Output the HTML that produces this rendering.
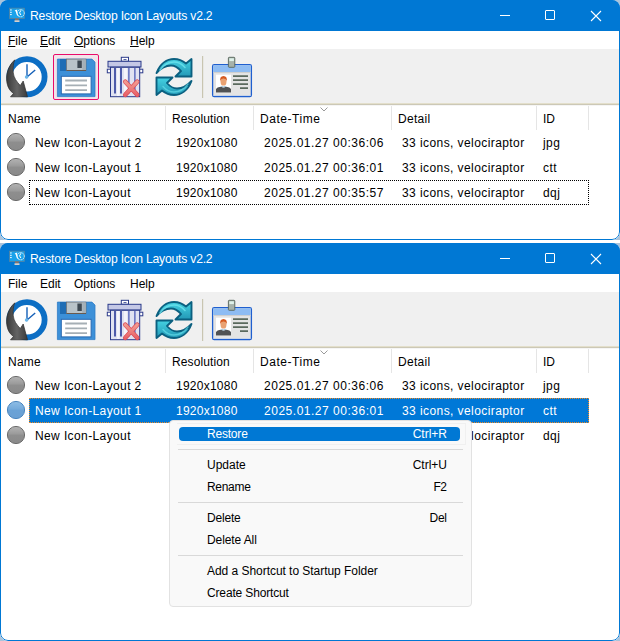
<!DOCTYPE html>
<html><head><meta charset="utf-8"><style>
*{box-sizing:border-box}
html,body{margin:0;padding:0;width:620px;height:641px;overflow:hidden;background:#fff;font-family:"Liberation Sans",sans-serif;font-size:12px;color:#000}
.shot{position:absolute;left:0;width:620px;background:#aac4dc}
.win{position:absolute;left:0;top:0;width:620px;height:100%;border-radius:8px;background:#fff;overflow:hidden}
.win::after{content:"";position:absolute;left:0;top:0;right:0;bottom:0;border:1px solid #0078d4;border-radius:8px;z-index:50;pointer-events:none}
.a{position:absolute;white-space:nowrap;line-height:14px}
.title{position:absolute;left:0;top:0;width:100%;height:31px;background:#0078d4}
.menubar{position:absolute;left:0;top:31px;width:100%;height:18px;background:#fff}
.toolbar{position:absolute;left:0;top:49px;width:100%;height:54px;background:#f0f0f0}
.tbl1{position:absolute;left:0;top:103px;width:100%;height:1px;background:#e3dfcb}
.tbl2{position:absolute;left:0;top:104px;width:100%;height:1px;background:#ccc8b6}
.tbl3{position:absolute;left:0;top:105px;width:100%;height:1px;background:#f5f5f5}
.col{position:absolute;top:106px;width:1px;height:24px;background:#e5e5e5}
.w{color:#fff}
.m{z-index:62}
</style></head><body>

<svg width="0" height="0" style="position:absolute">
<defs>
<linearGradient id="gball" x1="0" y1="0" x2="0" y2="1"><stop offset="0" stop-color="#b4b4b4"/><stop offset="0.45" stop-color="#9a9a9a"/><stop offset="0.5" stop-color="#8e8e8e"/><stop offset="1" stop-color="#8a8a8a"/></linearGradient>
<linearGradient id="gballs" x1="0" y1="0" x2="0" y2="1"><stop offset="0" stop-color="#8ebde6"/><stop offset="0.45" stop-color="#74aadb"/><stop offset="0.5" stop-color="#6aa2d6"/><stop offset="1" stop-color="#6aa0d4"/></linearGradient>
<symbol id="ball" viewBox="0 0 20 20"><circle cx="10" cy="10" r="8.6" fill="url(#gball)" stroke="#6c6c6c" stroke-width="1"/></symbol>
<symbol id="ballsel" viewBox="0 0 20 20"><circle cx="10" cy="10" r="8.6" fill="url(#gballs)" stroke="#4a86bf" stroke-width="1"/></symbol>
<g id="appicon">
  <rect x="9.4" y="8.1" width="15.2" height="10.4" fill="#1aa2ea" stroke="#6d7f8c" stroke-width="0.6"/>
  <rect x="10.1" y="9.4" width="1.6" height="1.1" fill="#eaf6ff"/><rect x="10.1" y="11.8" width="1.6" height="1.1" fill="#eaf6ff"/><rect x="10.1" y="14" width="1.6" height="1.1" fill="#eaf6ff"/>
  <circle cx="20.7" cy="13.2" r="3.6" fill="none" stroke="#e8f6ff" stroke-width="0.9" stroke-dasharray="1.4 0.5"/>
  <path d="M14.6 10.6 L17.2 9.6 L17 11.2 Q17.4 14 19 16.8 Q16.3 15.2 15.7 11.4 Z" fill="#fff"/>
  <path d="M20.9 10.3 L19.6 12.8 L20.9 15" fill="none" stroke="#fff" stroke-width="1"/>
  <rect x="15" y="18.5" width="3.8" height="1.8" fill="#8b7466"/>
  <rect x="14.5" y="20.3" width="5" height="1.7" fill="#d8d0cc"/>
</g>
<linearGradient id="garrow" x1="0" y1="0" x2="1" y2="0"><stop offset="0" stop-color="#3a3a3a"/><stop offset="0.5" stop-color="#646464"/><stop offset="1" stop-color="#3a3a3a"/></linearGradient>
<g id="clock">
  <circle cx="27" cy="76.8" r="17.6" fill="#fff" stroke="#0c6ec4" stroke-width="5.8"/>
  <path d="M27 64.3 V77 L35.2 70" fill="none" stroke="#1560b8" stroke-width="1.4"/>
  <circle cx="26.6" cy="77" r="1.8" fill="#6cb6e8"/>
  <path d="M14.8 59.8 C8 66 5.5 75 7 83 C8 88 10 91 13.5 93.5 L10.5 96.8 L27.5 96.8 L23.2 81 L20.3 85.5 C17 82 13.6 78 13.1 72 C12.9 67 13.4 63 14.8 59.8 Z" fill="url(#garrow)" stroke="#2e2e2e" stroke-width="0.7"/>
</g>
<g id="floppy">
  <path d="M57.4 59.1 H92 L95 62.1 V96.6 H57.4 Z" fill="#3d90d8" stroke="#2f7cc6" stroke-width="0.8"/>
  <rect x="60" y="59" width="6.5" height="12" fill="#1f6db5"/>
  <rect x="66.5" y="59.1" width="19.5" height="11.4" fill="#b9c3c9" stroke="#6d6560" stroke-width="0.6"/>
  <rect x="82.3" y="59.4" width="3.4" height="10.8" fill="#a4b0b8"/>
  <rect x="66.5" y="70" width="19.5" height="1" fill="#6a5a4e"/>
  <rect x="77.4" y="60.5" width="4.4" height="7.5" fill="#3d4852"/>
  <rect x="61.3" y="76.3" width="29.8" height="17.6" fill="#fff" stroke="#2a68b0" stroke-width="1"/>
  <path d="M65.2 80.5 H87 M65.2 85.3 H87 M65.2 90.2 H87" stroke="#a6afb5" stroke-width="1.8"/>
</g>
<linearGradient id="gx" x1="0" y1="0" x2="0" y2="1"><stop offset="0" stop-color="#f29a90"/><stop offset="1" stop-color="#e8636a"/></linearGradient>
<g id="trash">
  <rect x="121.3" y="57.3" width="7.2" height="4" fill="#fff" stroke="#2b3a8a" stroke-width="1"/>
  <rect x="123.5" y="59" width="3" height="0.8" fill="#2b3a8a"/>
  <rect x="108" y="61.3" width="33" height="5.7" fill="#c4c8e6" stroke="#2b3a8a" stroke-width="1"/>
  <rect x="107.3" y="69.2" width="3.4" height="3.6" fill="#fff" stroke="#2b3a8a" stroke-width="1"/>
  <rect x="139.4" y="69.2" width="3.4" height="3.6" fill="#fff" stroke="#2b3a8a" stroke-width="1"/>
  <rect x="110.5" y="67.3" width="29.2" height="29.4" fill="#e0e2f1" stroke="#2b3a8a" stroke-width="1"/>
  <rect x="117" y="68" width="2.5" height="28" fill="#f4f4fa"/><rect x="124" y="68" width="3" height="28" fill="#f4f4fa"/>
  <rect x="114" y="68" width="2" height="25.5" fill="#4d5aaa"/><rect x="120" y="68" width="2" height="25.5" fill="#4d5aaa"/>
  <rect x="128" y="68" width="1.7" height="25.5" fill="#6f7bc4"/><rect x="134" y="68" width="1.7" height="25.5" fill="#6f7bc4"/>
  <path d="M125.3 81.8 L137.2 94.7 M137.2 81.8 L125.3 94.7" stroke="#dc4650" stroke-width="4.6" stroke-linecap="round"/><path d="M125.3 81.8 L137.2 94.7 M137.2 81.8 L125.3 94.7" stroke="url(#gx)" stroke-width="3.2" stroke-linecap="round"/>
</g>
<linearGradient id="gref" x1="0" y1="0" x2="0" y2="1"><stop offset="0" stop-color="#45d2e2"/><stop offset="1" stop-color="#2398b6"/></linearGradient>
<g id="refresh" fill="url(#gref)" stroke="#0b6080" stroke-width="1.9" stroke-linejoin="round">
  <path d="M156.5 73 C160 63.5 167 59 174 59 C179 59 183 61 186 63.5 L191.5 59 L191.5 76.5 L175.5 76.5 L181 71 C178 67.5 175 65.5 171 65.5 C165 65.5 160.5 68.5 156.5 73 Z"/>
  <path d="M191.5 81 C188 90.5 181 95 174 95 C169 95 165 93 162 90.5 L156.5 95 L156.5 77.5 L172.5 77.5 L167 83 C170 86.5 173 88.5 177 88.5 C183 88.5 187.5 85.5 191.5 81 Z"/>

<path d="M160 70 C164 64.5 169 62 174 62 C178 62 182 64 185 67.5" fill="none" stroke="#6ee4ee" stroke-width="1.6" stroke-linecap="round" opacity="0.8"/>
<path d="M188 84 C184 89.5 179 92 174 92 C170 92 166 90 163 86.5" fill="none" stroke="#6ee4ee" stroke-width="1.4" stroke-linecap="round" opacity="0.6"/>
</g>
<g id="idcard">
  <rect x="212.6" y="64.6" width="38.8" height="32" rx="1.6" fill="#e4e4e4" stroke="#1f5fcf" stroke-width="1.3"/>
  <path d="M213.3 72 V65.3 H250.7 V72 Z" fill="#8ebcf3"/>
  <rect x="213.3" y="72" width="37.4" height="1" fill="#cfcfcf"/>
  <rect x="213.5" y="95" width="37" height="1" fill="#c8d4e8"/>
  <rect x="228.4" y="57.3" width="6.4" height="10" rx="0.8" fill="#a6b2aa" stroke="#56645a" stroke-width="0.9"/>
  <rect x="229.3" y="58.3" width="4.6" height="2.8" fill="#dff2ea"/>
  <rect x="216" y="74.7" width="15" height="17.9" fill="#fff"/>
  <path d="M216 92.6 V89 Q217 87.3 220.5 86.8 L223.5 87.6 L226.5 86.8 Q230 87.3 231 89 V92.6 Z" fill="#505254"/>
  <path d="M220.8 86.6 Q223.5 88.6 226.2 86.6 L225.5 85.8 Q223.5 87 221.5 85.8 Z" fill="#9cc0d8"/>
  <ellipse cx="223.5" cy="81.4" rx="3" ry="4.2" fill="#e9a273"/>
  <path d="M220.2 81 Q219.6 76.2 223.5 76 Q227.4 76.2 226.8 81 Q226.3 78.2 223.5 78.4 Q220.7 78.2 220.2 81 Z" fill="#d65a20"/>
  <path d="M233 76.2 H248 M233 80.2 H248 M233 84.2 H248 M240 88.2 H248" stroke="#5b6a5e" stroke-width="1.8"/>
</g>
</defs>
</svg>

<div class="shot" style="top:0px;height:240px"><div class="win">
<div class="title"></div>
<svg class="a" style="left:0;top:0" width="30" height="30"><use href="#appicon"/></svg>
<div class="a w" style="left:30px;top:9px;font-size:12.2px;letter-spacing:-0.22px">Restore Desktop Icon Layouts v2.2</div>

<div class="a" style="left:500px;top:15px;width:10px;height:1px;background:#fff"></div>
<div class="a" style="left:545px;top:10px;width:10px;height:10px;border:1px solid #fff;border-radius:1px"></div>
<svg class="a" style="left:590px;top:10px" width="12" height="12"><path d="M1 1 L11 11 M11 1 L1 11" stroke="#fff" stroke-width="1.1"/></svg>

<div class="menubar"></div>
<div class="a" style="left:8px;top:34px"><u>F</u>ile</div>
<div class="a" style="left:40px;top:34px"><u>E</u>dit</div>
<div class="a" style="left:74px;top:34px"><u>O</u>ptions</div>
<div class="a" style="left:130px;top:34px"><u>H</u>elp</div>
<div class="toolbar"></div><div class="tbl1"></div><div class="tbl2"></div><div class="tbl3"></div>
<div class="a" style="left:53px;top:54px;width:46px;height:46px;border:1.5px solid #ea0b6a;border-radius:2px;background:#f2e4ea"></div>
<svg class="a" style="left:0;top:49px" width="260" height="54" viewBox="0 49 260 54">
<use href="#clock"/><use href="#floppy"/><use href="#trash"/><use href="#refresh"/><use href="#idcard"/>
<rect x="202" y="56" width="1.2" height="42" fill="#c9c5b1"/>
</svg>

<div class="a" style="left:8px;top:112px;letter-spacing:0.25px">Name</div>
<div class="a" style="left:172px;top:112px;letter-spacing:0.1px">Resolution</div>
<div class="a" style="left:260px;top:112px;letter-spacing:0.55px">Date-Time</div>
<div class="a" style="left:398px;top:112px;letter-spacing:0.3px">Detail</div>
<div class="a" style="left:543px;top:112px">ID</div>
<div class="col" style="left:165px"></div>
<div class="col" style="left:253px"></div>
<div class="col" style="left:391px"></div>
<div class="col" style="left:536px"></div>
<div class="col" style="left:588px"></div>
<svg class="a" style="left:6px;top:132px" width="20" height="20"><use href="#ball"/></svg>
<div class="a" style="left:35px;top:136px;letter-spacing:0.39px">New Icon-Layout 2</div>
<div class="a" style="left:176px;top:136px;letter-spacing:0.25px">1920x1080</div>
<div class="a" style="left:264px;top:136px;letter-spacing:0.52px">2025.01.27 00:36:06</div>
<div class="a" style="left:402px;top:136px;letter-spacing:0.42px">33 icons, velociraptor</div>
<div class="a" style="left:543px;top:136px;letter-spacing:0.4px">jpg</div>
<svg class="a" style="left:6px;top:157px" width="20" height="20"><use href="#ball"/></svg>
<div class="a" style="left:35px;top:161px;letter-spacing:0.39px">New Icon-Layout 1</div>
<div class="a" style="left:176px;top:161px;letter-spacing:0.25px">1920x1080</div>
<div class="a" style="left:264px;top:161px;letter-spacing:0.52px">2025.01.27 00:36:01</div>
<div class="a" style="left:402px;top:161px;letter-spacing:0.42px">33 icons, velociraptor</div>
<div class="a" style="left:543px;top:161px;letter-spacing:0.4px">ctt</div>
<svg class="a" style="left:6px;top:182px" width="20" height="20"><use href="#ball"/></svg>
<div class="a" style="left:29px;top:180px;width:560px;height:25px;border:1px dotted #000"></div>
<div class="a" style="left:35px;top:186px;letter-spacing:0.39px">New Icon-Layout</div>
<div class="a" style="left:176px;top:186px;letter-spacing:0.25px">1920x1080</div>
<div class="a" style="left:264px;top:186px;letter-spacing:0.52px">2025.01.27 00:35:57</div>
<div class="a" style="left:402px;top:186px;letter-spacing:0.42px">33 icons, velociraptor</div>
<div class="a" style="left:543px;top:186px;letter-spacing:0.4px">dqj</div>
<svg class="a" style="left:320px;top:106.5px" width="8" height="5"><path d="M0.5 0.5 L4 4 L7.5 0.5" fill="none" stroke="#9a9a9a" stroke-width="1"/></svg>
</div></div>
<div class="shot" style="top:243px;height:398px"><div class="win">
<div class="title"></div>
<svg class="a" style="left:0;top:0" width="30" height="30"><use href="#appicon"/></svg>
<div class="a w" style="left:30px;top:9px;font-size:12.2px;letter-spacing:-0.22px">Restore Desktop Icon Layouts v2.2</div>

<div class="a" style="left:500px;top:15px;width:10px;height:1px;background:#fff"></div>
<div class="a" style="left:545px;top:10px;width:10px;height:10px;border:1px solid #fff;border-radius:1px"></div>
<svg class="a" style="left:590px;top:10px" width="12" height="12"><path d="M1 1 L11 11 M11 1 L1 11" stroke="#fff" stroke-width="1.1"/></svg>

<div class="menubar"></div>
<div class="a" style="left:8px;top:34px">File</div>
<div class="a" style="left:40px;top:34px">Edit</div>
<div class="a" style="left:74px;top:34px">Options</div>
<div class="a" style="left:130px;top:34px">Help</div>
<div class="toolbar"></div><div class="tbl1"></div><div class="tbl2"></div><div class="tbl3"></div>

<svg class="a" style="left:0;top:49px" width="260" height="54" viewBox="0 49 260 54">
<use href="#clock"/><use href="#floppy"/><use href="#trash"/><use href="#refresh"/><use href="#idcard"/>
<rect x="202" y="56" width="1.2" height="42" fill="#c9c5b1"/>
</svg>

<div class="a" style="left:8px;top:112px;letter-spacing:0.25px">Name</div>
<div class="a" style="left:172px;top:112px;letter-spacing:0.1px">Resolution</div>
<div class="a" style="left:260px;top:112px;letter-spacing:0.55px">Date-Time</div>
<div class="a" style="left:398px;top:112px;letter-spacing:0.3px">Detail</div>
<div class="a" style="left:543px;top:112px">ID</div>
<div class="col" style="left:165px"></div>
<div class="col" style="left:253px"></div>
<div class="col" style="left:391px"></div>
<div class="col" style="left:536px"></div>
<div class="col" style="left:588px"></div>
<svg class="a" style="left:6px;top:132px" width="20" height="20"><use href="#ball"/></svg>
<div class="a" style="left:35px;top:136px;letter-spacing:0.39px">New Icon-Layout 2</div>
<div class="a" style="left:176px;top:136px;letter-spacing:0.25px">1920x1080</div>
<div class="a" style="left:264px;top:136px;letter-spacing:0.52px">2025.01.27 00:36:06</div>
<div class="a" style="left:402px;top:136px;letter-spacing:0.42px">33 icons, velociraptor</div>
<div class="a" style="left:543px;top:136px;letter-spacing:0.4px">jpg</div>
<div class="a" style="left:29px;top:155px;width:560px;height:25px;background:#0078d7"></div>
<svg class="a" style="left:6px;top:157px" width="20" height="20"><use href="#ballsel"/></svg>
<div class="a" style="left:29px;top:155px;width:560px;height:25px;border:1px dotted #f08a24"></div>
<div class="a w" style="left:35px;top:161px;letter-spacing:0.39px">New Icon-Layout 1</div>
<div class="a w" style="left:176px;top:161px;letter-spacing:0.25px">1920x1080</div>
<div class="a w" style="left:264px;top:161px;letter-spacing:0.52px">2025.01.27 00:36:01</div>
<div class="a w" style="left:402px;top:161px;letter-spacing:0.42px">33 icons, velociraptor</div>
<div class="a w" style="left:543px;top:161px;letter-spacing:0.4px">ctt</div>
<svg class="a" style="left:6px;top:182px" width="20" height="20"><use href="#ball"/></svg>
<div class="a" style="left:35px;top:186px;letter-spacing:0.39px">New Icon-Layout</div>
<div class="a" style="left:176px;top:186px;letter-spacing:0.25px">1920x1080</div>
<div class="a" style="left:264px;top:186px;letter-spacing:0.52px">2025.01.27 00:35:57</div>
<div class="a" style="left:402px;top:186px;letter-spacing:0.42px">33 icons, velociraptor</div>
<div class="a" style="left:543px;top:186px;letter-spacing:0.4px">dqj</div>
<svg class="a" style="left:320px;top:106.5px" width="8" height="5"><path d="M0.5 0.5 L4 4 L7.5 0.5" fill="none" stroke="#9a9a9a" stroke-width="1"/></svg>
<div class="a" style="left:169px;top:177px;width:303px;height:187px;background:#f9f9f9;border:1px solid #e2e2e2;border-radius:4px;z-index:60"></div>
<div class="a" style="left:179px;top:184px;width:281px;height:14px;background:#0078d4;border-radius:4px;z-index:61"></div>
<div class="a" style="left:177px;top:180px;width:289px;height:1px;background:#f0f0f0;z-index:61"></div>
<div class="a" style="left:177px;top:201px;width:289px;height:1px;background:#f0f0f0;z-index:61"></div>
<div class="a" style="left:465px;top:181px;width:1px;height:20px;background:#f0f0f0;z-index:61"></div>
<div class="a" style="left:178px;top:206px;width:285px;height:1px;background:#d9d9d9;z-index:61"></div>
<div class="a" style="left:178px;top:259px;width:285px;height:1px;background:#d9d9d9;z-index:61"></div>
<div class="a" style="left:178px;top:312px;width:285px;height:1px;background:#d9d9d9;z-index:61"></div>
<div class="a w m" style="top:184px;left:207px;letter-spacing:-0.2px">Restore</div>
<div class="a w m" style="top:184px;right:173px">Ctrl+R</div>
<div class="a  m" style="top:215px;left:207px">Update</div>
<div class="a  m" style="top:215px;right:173px">Ctrl+U</div>
<div class="a  m" style="top:237px;left:207px;letter-spacing:-0.3px">Rename</div>
<div class="a  m" style="top:237px;right:173.60000000000002px;letter-spacing:-0.6px">F2</div>
<div class="a  m" style="top:268px;left:207px;letter-spacing:-0.2px">Delete</div>
<div class="a  m" style="top:268px;right:173.3px;letter-spacing:-0.3px">Del</div>
<div class="a  m" style="top:290px;left:207px;letter-spacing:-0.1px">Delete All</div>
<div class="a  m" style="top:321px;left:207px;letter-spacing:-0.04px">Add a Shortcut to Startup Folder</div>
<div class="a  m" style="top:343px;left:207px;letter-spacing:-0.15px">Create Shortcut</div>
</div></div>
</body></html>
